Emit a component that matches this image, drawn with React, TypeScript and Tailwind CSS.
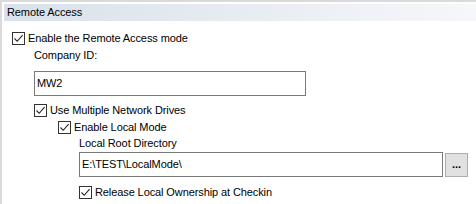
import React from 'react'

function Check() {
  return (
    <div className="w-[13px] h-[13px] border border-[#333333] bg-white flex items-center justify-center shrink-0">
      <svg width="11" height="11" viewBox="0 0 11 11" fill="none">
        <path d="M1.5 5.5 L4.2 8.3 L9.6 2.2" stroke="#222222" strokeWidth="1.1" />
      </svg>
    </div>
  )
}

function CheckRow({ label, className }: { label: string; className: string }) {
  return (
    <div className={`flex items-center h-[13px] gap-[3px] ${className}`}>
      <Check />
      <span className="leading-[13px]">{label}</span>
    </div>
  )
}

export default function App() {
  return (
    <div className="w-[476px] h-[204px] bg-white border-l-2 border-t-2 border-[#dadada] overflow-hidden text-[11px] tracking-[-0.1px] text-black font-['Liberation_Sans',Arial,sans-serif]">
      {/* Group header */}
      <div className="ml-[2px] mt-[2px] h-[17px] bg-gradient-to-r from-[#d9e1ea] to-[#f6f7fa] pl-[3px] flex items-center">
        Remote Access
      </div>

      <CheckRow label="Enable the Remote Access mode" className="mt-[11px] ml-[10px]" />

      <div className="mt-[3px] ml-[32px] h-[14px] leading-[14px]">Company ID:</div>
      <div className="mt-[9px] ml-[32px] w-[272px] h-[25px] border border-[#7a7a7a] pl-[2px] flex items-center">
        MW2
      </div>

      <CheckRow label="Use Multiple Network Drives" className="mt-[8px] ml-[32px]" />
      <CheckRow label="Enable Local Mode" className="mt-[4px] ml-[56px]" />

      <div className="mt-[2px] ml-[77px] h-[14px] leading-[14px]">Local Root Directory</div>
      <div className="mt-[2px] ml-[77px] flex items-start">
        <div className="w-[364px] h-[25px] border border-[#7a7a7a] pl-[2px] flex items-center">
          E:\TEST\LocalMode\
        </div>
        <button className="ml-[2px] mt-[1px] w-[23px] h-[24px] border border-[#adadad] bg-[#e1e1e1] flex items-center justify-center font-bold leading-none pb-[2px]">
          ...
        </button>
      </div>

      <CheckRow label="Release Local Ownership at Checkin" className="mt-[9px] ml-[77px]" />
    </div>
  )
}
